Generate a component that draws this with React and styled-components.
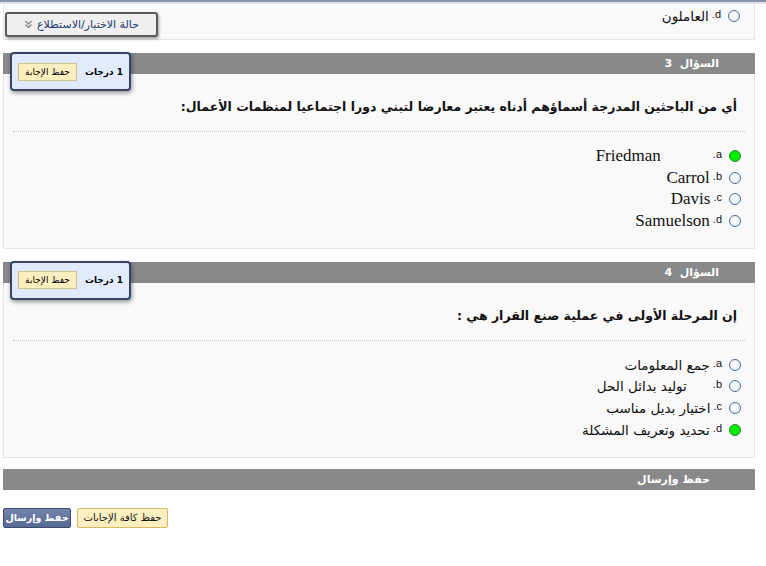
import React from "react";
import styled, { createGlobalStyle } from "styled-components";

const GlobalStyle = createGlobalStyle`
  html, body {
    margin: 0;
    padding: 0;
    background: #ffffff;
    font-family: "DejaVu Sans", "Liberation Sans", sans-serif;
  }
`;

const questions = [
  {
    number: 3,
    text: "أي من الباحثين المدرجة أسماؤهم أدناه يعتبر معارضا لتبني دورا اجتماعيا لمنظمات الأعمال:",
    latin: true,
    options: [
      { letter: "a.", label: "Friedman", gap: 52, checked: true },
      { letter: "b.", label: "Carrol" },
      { letter: "c.", label: "Davis" },
      { letter: "d.", label: "Samuelson" },
    ],
  },
  {
    number: 4,
    text: "إن المرحلة الأولى في عملية صنع القرار هي :",
    latin: false,
    options: [
      { letter: "a.", label: "جمع المعلومات" },
      { letter: "b.", label: "توليد بدائل الحل", gap: 26 },
      { letter: "c.", label: "اختيار بديل مناسب" },
      { letter: "d.", label: "تحديد وتعريف المشكلة", checked: true },
    ],
  },
];

const DoubleChevron = () => (
  <svg width="9" height="9" viewBox="0 0 9 9">
    <path d="M1.5 1 L4.5 4 L7.5 1 M1.5 4.5 L4.5 7.5 L7.5 4.5" fill="none" stroke="#8a8a8a" strokeWidth="1.4" />
  </svg>
);

const App = () => {
  return (
    <>
      <GlobalStyle />
      <TopStrip />
      <Page>
        <PrevBox>
          <StatusButton>
            <StatusLabel>حالة الاختبار/الاستطلاع</StatusLabel>
            <DoubleChevron />
          </StatusButton>
          <Option>
            <Radio />
            <Letter>d.</Letter>
            <ArabicLabel>العاملون</ArabicLabel>
          </Option>
        </PrevBox>

        {questions.map((q) => (
          <Question key={q.number}>
            <Header>
              السؤال&nbsp;&nbsp;{q.number}
              <PointsBox>
                <Points>1 درجات</Points>
                <SaveOne>حفظ الإجابة</SaveOne>
              </PointsBox>
            </Header>
            <Body>
              <QuestionText>{q.text}</QuestionText>
              <Divider />
              <Options>
                {q.options.map((o) => (
                  <Option key={o.letter}>
                    <Radio checked={o.checked} />
                    <Letter gap={o.gap}>{o.letter}</Letter>
                    {q.latin ? (
                      <LatinLabel>{o.label}</LatinLabel>
                    ) : (
                      <ArabicLabel>{o.label}</ArabicLabel>
                    )}
                  </Option>
                ))}
              </Options>
            </Body>
          </Question>
        ))}

        <SubmitBar>حفظ وإرسال</SubmitBar>
        <Buttons>
          <SubmitButton>حفظ وإرسال</SubmitButton>
          <SaveAllButton>حفظ كافة الإجابات</SaveAllButton>
        </Buttons>
      </Page>
    </>
  );
};

const TopStrip = styled.div`
  height: 2px;
  background: #8594ad;
  border-bottom: 2px solid #e6e6e6;
`;

const Page = styled.div`
  direction: rtl;
  width: 752px;
  margin-left: 3px;
  display: flex;
  flex-direction: column;
`;

const PrevBox = styled.div`
  position: relative;
  height: 36px;
  box-sizing: border-box;
  background: #f9f9f9;
  border: 1px solid #e6e6e6;
  border-top: none;
  padding: 1px 14px 0 0;
`;

const StatusButton = styled.div`
  position: absolute;
  left: 1px;
  top: 8px;
  width: 153px;
  height: 25px;
  box-sizing: border-box;
  border: 2px solid #5a5a5a;
  border-radius: 3px;
  background: #efefef;
  box-shadow: 1px 2px 3px rgba(0, 0, 0, 0.35);
  display: flex;
  align-items: center;
  justify-content: center;
  gap: 4px;
  direction: rtl;
`;

const StatusLabel = styled.span`
  font-size: 11px;
  letter-spacing: 0.6px;
  color: #1e3c6e;
  white-space: nowrap;
`;

const Question = styled.div`
  margin-top: 13px;
  display: flex;
  flex-direction: column;
`;

const Header = styled.div`
  position: relative;
  height: 21px;
  background: #898989;
  color: #ffffff;
  font-weight: bold;
  font-size: 11px;
  line-height: 21px;
  padding-right: 36px;
`;

const PointsBox = styled.div`
  position: absolute;
  left: 7px;
  top: -1px;
  width: 121px;
  height: 39px;
  box-sizing: border-box;
  border: 2px solid #3a4566;
  border-radius: 4px;
  background: #e1ebfb;
  box-shadow: 1px 2px 4px rgba(0, 0, 0, 0.4);
  display: flex;
  align-items: center;
  justify-content: space-between;
  padding: 0 6px;
  color: #000;
  line-height: normal;
`;

const Points = styled.span`
  font-size: 9px;
  font-weight: bold;
  white-space: nowrap;
`;

const SaveOne = styled.span`
  flex-shrink: 0;
  width: 59px;
  height: 18px;
  box-sizing: border-box;
  background: #fcefbf;
  border: 1px solid #d3c08a;
  font-size: 9px;
  font-weight: normal;
  display: flex;
  align-items: center;
  justify-content: center;
  white-space: nowrap;
`;

const Body = styled.div`
  background: #f9f9f9;
  border: 1px solid #e6e6e6;
  border-top: none;
  padding: 23px 0 16px;
  display: flex;
  flex-direction: column;
`;

const QuestionText = styled.div`
  font-size: 12.5px;
  font-weight: bold;
  color: #111;
  padding-right: 17px;
  line-height: 20px;
  white-space: nowrap;
`;

const Divider = styled.div`
  margin: 14px 9px 0;
  border-top: 1px dotted #c4c4c4;
`;

const Options = styled.div`
  padding: 13px 13px 0 0;
  display: flex;
  flex-direction: column;
`;

const Option = styled.div`
  display: flex;
  align-items: center;
  height: 21.7px;
`;

const Radio = styled.span`
  width: 12px;
  height: 12px;
  border-radius: 50%;
  box-sizing: border-box;
  border: 1px solid ${(p) => (p.checked ? "#3a7a3a" : "#4e6e96")};
  background: ${(p) =>
    p.checked ? "#00f000" : "radial-gradient(circle at 40% 35%, #ffffff, #e4e8ee)"};
  margin-left: 7px;
  flex-shrink: 0;
`;

const Letter = styled.span`
  font-family: "Liberation Sans", sans-serif;
  font-size: 11px;
  color: #111;
  position: relative;
  top: -2px;
  margin-left: ${(p) => (p.gap ? p.gap : 3)}px;
`;

const LatinLabel = styled.span`
  font-family: "Liberation Serif", serif;
  font-size: 17px;
  color: #111;
  direction: ltr;
`;

const ArabicLabel = styled.span`
  font-size: 13.5px;
  color: #111;
`;

const SubmitBar = styled.div`
  margin-top: 11px;
  height: 21px;
  background: #898989;
  color: #fff;
  font-weight: bold;
  font-size: 11px;
  line-height: 21px;
  padding-right: 45px;
`;

const Buttons = styled.div`
  direction: ltr;
  display: flex;
  gap: 6px;
  margin-top: 18px;
`;

const SubmitButton = styled.div`
  width: 68px;
  height: 20px;
  box-sizing: border-box;
  border: 1px solid #3f4c6f;
  border-radius: 2px;
  background: linear-gradient(#7385ab, #566a95);
  color: #fff;
  font-size: 9.5px;
  font-weight: bold;
  white-space: nowrap;
  display: flex;
  align-items: center;
  justify-content: center;
  direction: rtl;
`;

const SaveAllButton = styled.div`
  width: 91px;
  height: 20px;
  box-sizing: border-box;
  border: 1px solid #d8b865;
  border-radius: 2px;
  background: #fdefc0;
  color: #111;
  font-size: 10px;
  white-space: nowrap;
  display: flex;
  align-items: center;
  justify-content: center;
  direction: rtl;
`;

export default App;
